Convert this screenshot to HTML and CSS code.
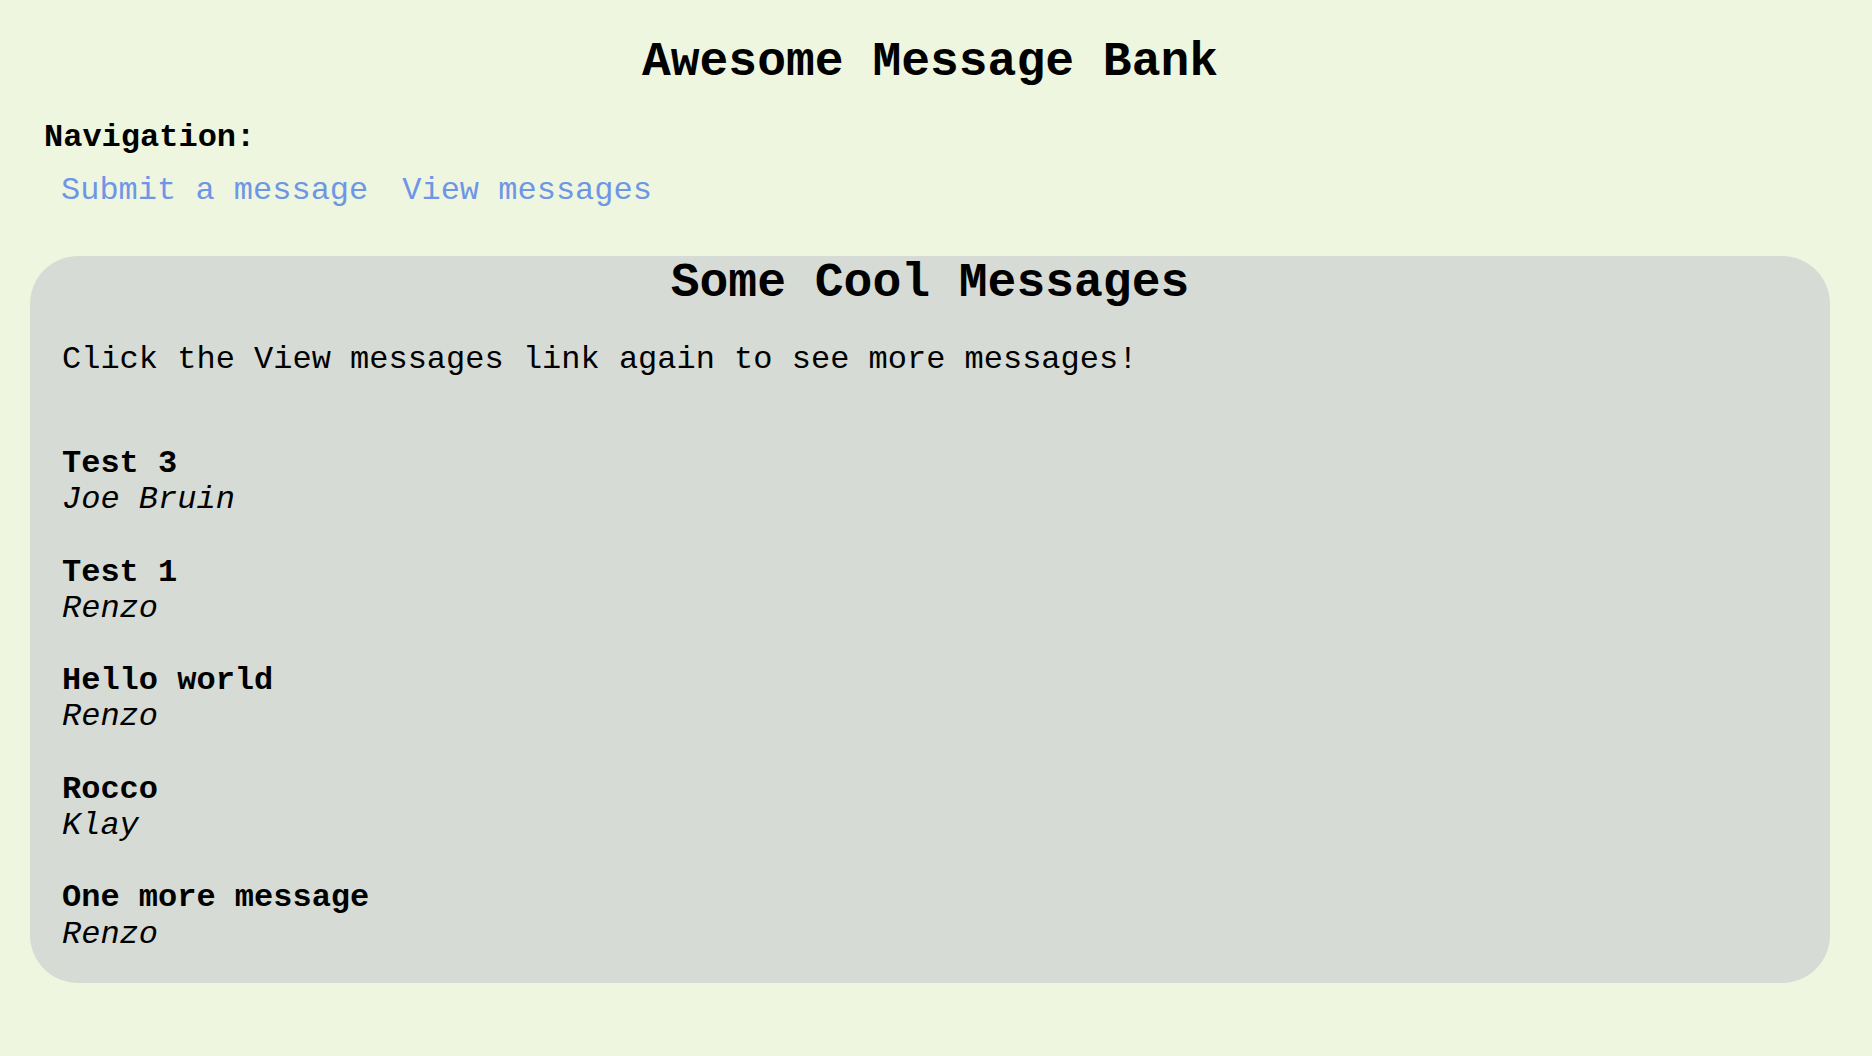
FILE: index.html
```html
<!DOCTYPE html>
<html>
<head>
<meta charset="utf-8">
<title>Awesome Message Bank</title>
<link rel="stylesheet" href="styles.css">
</head>
<body>
<div class="page">
  <h1 class="title">Awesome Message Bank</h1>
  <nav class="nav">
    <div class="nav-label">Navigation:</div>
    <div class="nav-links">
      <a class="nav-link" href="#">Submit a message</a>
      <a class="nav-link" href="#">View messages</a>
    </div>
  </nav>
  <main class="box">
    <h2 class="box-title">Some Cool Messages</h2>
    <p class="hint">Click the View messages link again to see more messages!</p>
    <div class="messages">
      <div class="message"><div class="msg-title">Test 3</div><div class="msg-author">Joe Bruin</div></div>
      <div class="message"><div class="msg-title">Test 1</div><div class="msg-author">Renzo</div></div>
      <div class="message"><div class="msg-title">Hello world</div><div class="msg-author">Renzo</div></div>
      <div class="message"><div class="msg-title">Rocco</div><div class="msg-author">Klay</div></div>
      <div class="message"><div class="msg-title">One more message</div><div class="msg-author">Renzo</div></div>
    </div>
  </main>
</div>
</body>
</html>
```
FILE: styles.css
```css
html, body {
  margin: 0;
  padding: 0;
}
body {
  background: #eef6df;
  color: #000;
  font-family: "Courier New", "Nimbus Mono PS", "Nimbus Mono L", "FreeMono", "Liberation Mono", monospace;
  font-size: 32px;
}
.page {
  width: 1800px;
  margin-left: 30px;
  padding-top: 35px;
}
.title {
  margin: 0;
  font-size: 48px;
  font-weight: bold;
  line-height: 54px;
  text-align: center;
}
.nav {
  margin-top: 31px;
  padding-left: 14px;
}
.nav-label {
  font-weight: bold;
  line-height: 36px;
}
.nav-links {
  display: flex;
  margin-top: 17px;
  line-height: 36px;
}
.nav-link {
  color: #6f96e6;
  text-decoration: none;
  padding: 0 17px;
}
.box {
  margin-top: 47px;
  background: #d6dbd5;
  border-radius: 48px;
  padding: 0 32px 30px 32px;
}
.box-title {
  margin: 0;
  font-size: 48px;
  font-weight: bold;
  line-height: 54px;
  text-align: center;
}
.hint {
  margin: 32px 0 0 0;
  line-height: 36px;
}
.messages {
  margin-top: 68px;
  display: flex;
  flex-direction: column;
  gap: 36px;
}
.message {
  line-height: 36.3px;
}
.msg-title {
  font-weight: bold;
}
.msg-author {
  font-style: italic;
}
```
